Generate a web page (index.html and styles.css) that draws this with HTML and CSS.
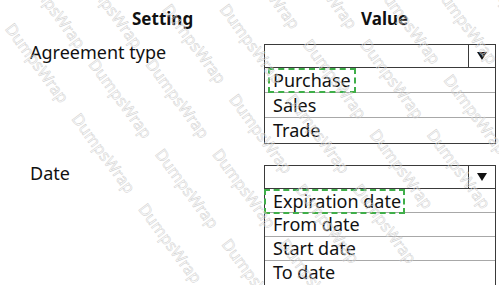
FILE: index.html
```html
<!DOCTYPE html>
<html lang="en">
<head>
    <meta charset="UTF-8">
    <meta name="viewport" content="width=device-width, initial-scale=1.0">
    <title>Setting / Value</title>
    <link rel="stylesheet" href="styles.css">
</head>
<body>
    <main class="sheet">
        <!-- Cabeçalho -->
        <div class="head">
            <div class="head-setting">Setting</div>
            <div class="head-value">Value</div>
        </div>

        <!-- Agreement type -->
        <div class="row">
            <div class="label">Agreement type</div>
            <div class="select">
                <div class="select-top">
                    <span class="select-field"></span>
                    <span class="select-arrow"></span>
                </div>
                <div class="option"><span class="pick pick-short">Purchase</span></div>
                <div class="option">Sales</div>
                <div class="option">Trade</div>
            </div>
        </div>

        <!-- Date -->
        <div class="row">
            <div class="label">Date</div>
            <div class="select compact">
                <div class="select-top">
                    <span class="select-field"></span>
                    <span class="select-arrow"></span>
                </div>
                <div class="option"><span class="pick pick-wide">Expiration date</span></div>
                <div class="option">From date</div>
                <div class="option">Start date</div>
                <div class="option">To date</div>
            </div>
        </div>

        <div class="watermark" aria-hidden="true">
            <p>DumpsWrap DumpsWrap DumpsWrap DumpsWrap DumpsWrap DumpsWrap DumpsWrap DumpsWrap</p>
            <p class="shift">DumpsWrap DumpsWrap DumpsWrap DumpsWrap DumpsWrap DumpsWrap DumpsWrap DumpsWrap</p>
            <p>DumpsWrap DumpsWrap DumpsWrap DumpsWrap DumpsWrap DumpsWrap DumpsWrap DumpsWrap</p>
            <p class="shift">DumpsWrap DumpsWrap DumpsWrap DumpsWrap DumpsWrap DumpsWrap DumpsWrap DumpsWrap</p>
            <p>DumpsWrap DumpsWrap DumpsWrap DumpsWrap DumpsWrap DumpsWrap DumpsWrap DumpsWrap</p>
            <p class="shift">DumpsWrap DumpsWrap DumpsWrap DumpsWrap DumpsWrap DumpsWrap DumpsWrap DumpsWrap</p>
            <p>DumpsWrap DumpsWrap DumpsWrap DumpsWrap DumpsWrap DumpsWrap DumpsWrap DumpsWrap</p>
            <p class="shift">DumpsWrap DumpsWrap DumpsWrap DumpsWrap DumpsWrap DumpsWrap DumpsWrap DumpsWrap</p>
            <p>DumpsWrap DumpsWrap DumpsWrap DumpsWrap DumpsWrap DumpsWrap DumpsWrap DumpsWrap</p>
            <p class="shift">DumpsWrap DumpsWrap DumpsWrap DumpsWrap DumpsWrap DumpsWrap DumpsWrap DumpsWrap</p>
            <p>DumpsWrap DumpsWrap DumpsWrap DumpsWrap DumpsWrap DumpsWrap DumpsWrap DumpsWrap</p>
            <p class="shift">DumpsWrap DumpsWrap DumpsWrap DumpsWrap DumpsWrap DumpsWrap DumpsWrap DumpsWrap</p>
            <p>DumpsWrap DumpsWrap DumpsWrap DumpsWrap DumpsWrap DumpsWrap DumpsWrap DumpsWrap</p>
            <p class="shift">DumpsWrap DumpsWrap DumpsWrap DumpsWrap DumpsWrap DumpsWrap DumpsWrap DumpsWrap</p>
        </div>
    </main>
</body>
</html>
```

FILE: styles.css
```css
body {
    font-family: "Noto Sans", Arial, sans-serif;
    margin: 0;
    padding: 0;
    background-color: #fff;
    color: #111;
    overflow: hidden;
}
.sheet {
    position: relative;
    width: 499px;
    height: 285px;
    overflow: hidden;
    padding-left: 30px;
    box-sizing: border-box;
}
.head {
    display: flex;
    height: 44px;
    font-weight: bold;
    font-size: 17px;
    line-height: 20px;
    padding-top: 9px;
    box-sizing: border-box;
}
.head-setting {
    width: 234px;
    padding-left: 102px;
    box-sizing: border-box;
}
.head-value {
    padding-left: 97px;
}
.row {
    display: flex;
    align-items: flex-start;
    margin-bottom: 21px;
}
.label {
    width: 234px;
    font-size: 18px;
    line-height: 20px;
    margin-top: -2px;
}
.select {
    width: 232px;
    border: 1.5px solid #3a3a3a;
    box-sizing: border-box;
    font-size: 18px;
}
.select-top {
    display: flex;
    height: 22px;
    border-bottom: 1.5px solid #3a3a3a;
}
.select-field {
    flex: 1;
}
.select-arrow {
    width: 26px;
    border-left: 1.5px solid #3a3a3a;
    display: flex;
    align-items: center;
    justify-content: center;
}
.select-arrow::after {
    content: "";
    border-left: 5px solid transparent;
    border-right: 5px solid transparent;
    border-top: 8px solid #111;
}
.option {
    height: 25px;
    line-height: 24px;
    padding-left: 8px;
    border-bottom: 1px solid #a8a8a8;
    box-sizing: border-box;
}
.option:last-child {
    border-bottom: none;
}
.compact .option {
    height: 24px;
    line-height: 23px;
}
.pick {
    display: inline-block;
    border: 2px dashed #3fae49;
    line-height: 21px;
    height: 25px;
    box-sizing: border-box;
    vertical-align: top;
}
.pick-short {
    margin-left: -5px;
    padding: 0 3px 0 3px;
}
.pick-wide {
    margin-left: -9px;
    padding: 0 2px 0 7px;
}
.watermark {
    position: absolute;
    left: -260px;
    top: -420px;
    width: 1100px;
    transform: rotate(53.5deg);
    transform-origin: 50% 50%;
    pointer-events: none;
    font-size: 16px;
    color: transparent;
    -webkit-text-stroke: 0.5px #cfcfcf;
    white-space: nowrap;
    word-spacing: 14px;
}
.watermark p {
    margin: 0;
    line-height: 46px;
}
.watermark .shift {
    padding-left: 34px;
}
```
